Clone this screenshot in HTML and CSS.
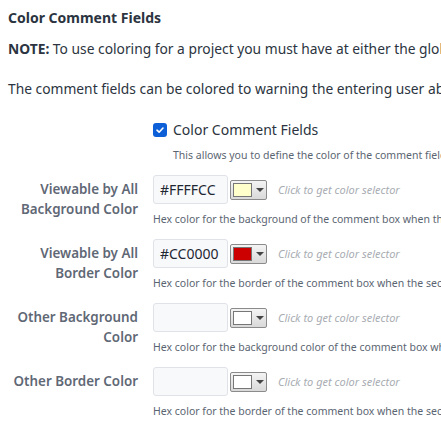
FILE: index.html
```html
<!DOCTYPE html>
<html lang="en">
<head>
    <meta charset="UTF-8">
    <title>Color Comment Fields</title>
    <link rel="stylesheet" href="styles.css">
</head>
<body>
    <div class="page">
        <h3 class="title">Color Comment Fields</h3>
        <p class="note"><b>NOTE:</b> To use coloring for a project you must have at either the global or project level enabled coloring.</p>
        <p class="intro">The comment fields can be colored to warning the entering user about who will be able to see the comment.</p>

        <div class="check-row">
            <label class="check">
                <span class="box">
                    <svg width="10" height="10" viewBox="0 0 10 10"><path d="M2 5.2 L4.1 7.2 L8 3" fill="none" stroke="#fff" stroke-width="1.6" stroke-linecap="round" stroke-linejoin="round"/></svg>
                </span>
                Color Comment Fields
            </label>
            <div class="help">This allows you to define the color of the comment fields based on who can view them.</div>
        </div>

        <div class="field">
            <div class="label">Viewable by All Background Color</div>
            <div class="control">
                <div class="inputs">
                    <div class="hex">#FFFFCC</div>
                    <div class="swatch"><span class="chip" style="background:#ffffcc"></span><span class="arrow"></span></div>
                    <span class="hint">Click to get color selector</span>
                </div>
                <div class="help">Hex color for the background of the comment box when the comment is viewable by all.</div>
            </div>
        </div>

        <div class="field">
            <div class="label">Viewable by All Border Color</div>
            <div class="control">
                <div class="inputs">
                    <div class="hex">#CC0000</div>
                    <div class="swatch"><span class="chip" style="background:#cc0000"></span><span class="arrow"></span></div>
                    <span class="hint">Click to get color selector</span>
                </div>
                <div class="help">Hex color for the border of the comment box when the security is viewable by all.</div>
            </div>
        </div>

        <div class="field">
            <div class="label">Other Background Color</div>
            <div class="control">
                <div class="inputs">
                    <div class="hex"></div>
                    <div class="swatch"><span class="chip"></span><span class="arrow"></span></div>
                    <span class="hint">Click to get color selector</span>
                </div>
                <div class="help">Hex color for the background color of the comment box when the security is other.</div>
            </div>
        </div>

        <div class="field">
            <div class="label">Other Border Color</div>
            <div class="control">
                <div class="inputs">
                    <div class="hex"></div>
                    <div class="swatch"><span class="chip"></span><span class="arrow"></span></div>
                    <span class="hint">Click to get color selector</span>
                </div>
                <div class="help">Hex color for the border of the comment box when the security is other.</div>
            </div>
        </div>
    </div>
</body>
</html>
```

FILE: styles.css
```css
body, html {
    margin: 0;
    padding: 0;
    background-color: #ffffff;
    font-family: 'Noto Sans', sans-serif;
    color: #2b3440;
    overflow: hidden;
}
.page {
    padding: 8px 0 0 8px;
    white-space: nowrap;
}
.title {
    margin: 0;
    font-size: 14px;
    font-weight: bold;
    line-height: 20px;
}
.note {
    margin: 11px 0 0 0;
    font-size: 13.8px;
    line-height: 20px;
}
.intro {
    margin: 20px 0 0 0;
    font-size: 13.8px;
    line-height: 20px;
}
.check-row {
    margin: 21px 0 0 145px;
}
.check {
    display: flex;
    align-items: center;
    gap: 6px;
    font-size: 14px;
    line-height: 20px;
}
.box {
    width: 14px;
    height: 14px;
    border-radius: 3px;
    background-color: #0d5fd8;
    display: flex;
    align-items: center;
    justify-content: center;
}
.check-row .help {
    margin: 8px 0 0 20px;
}
.help {
    font-size: 10.5px;
    line-height: 14px;
    color: #5b6572;
}
.field {
    display: flex;
    margin-top: 13px;
}
.label {
    flex-shrink: 0;
    width: 130px;
    padding-right: 15px;
    text-align: right;
    white-space: normal;
    font-size: 13.4px;
    font-weight: 600;
    line-height: 20px;
    color: #5f6875;
    padding-top: 4px;
}
.control {
    display: flex;
    flex-direction: column;
}
.inputs {
    display: flex;
    align-items: center;
}
.hex {
    width: 67px;
    height: 27px;
    border: 1px solid #dfe3e8;
    border-radius: 3px;
    background-color: #f8f9fb;
    font-size: 14px;
    line-height: 27px;
    padding-left: 6px;
    color: #1f2733;
}
.swatch {
    margin-left: 2px;
    width: 35px;
    height: 18px;
    border: 1px solid #8b8b8b;
    border-radius: 2px;
    background: linear-gradient(#f4f4f4, #d9d9d9);
    display: flex;
    align-items: center;
}
.chip {
    margin-left: 2px;
    width: 17px;
    height: 12px;
    border: 1px solid #777;
    background-color: #ffffff;
}
.arrow {
    margin-left: 4px;
    width: 0;
    height: 0;
    border-left: 4px solid transparent;
    border-right: 4px solid transparent;
    border-top: 4px solid #444;
}
.hint {
    margin-left: 11px;
    font-size: 11px;
    font-style: italic;
    color: #a9adb3;
}
.inputs + .help {
    margin-top: 8px;
}
```
